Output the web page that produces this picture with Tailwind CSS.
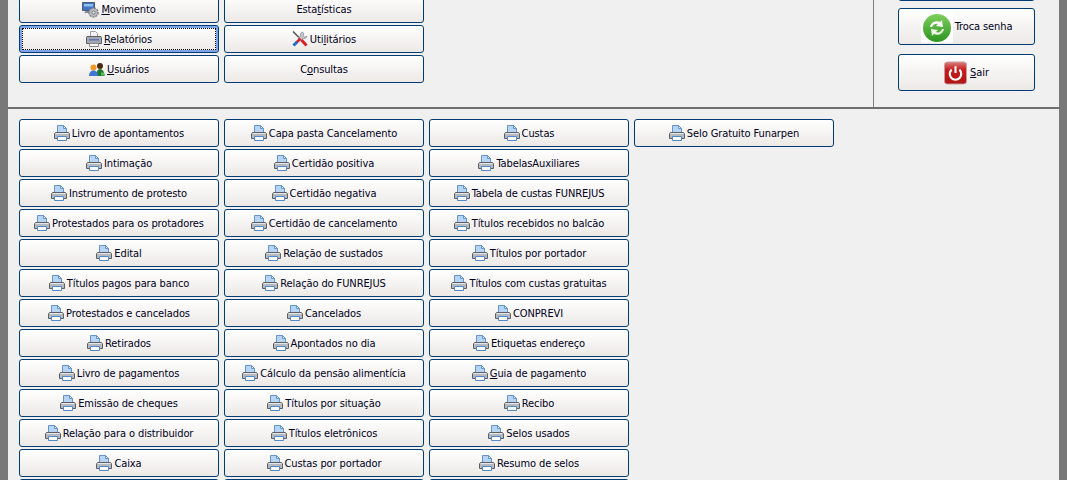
<!DOCTYPE html>
<html lang="pt-BR">
<head>
  <meta charset="UTF-8" />
  <title>Relatórios</title>
  <script src="https://cdn.jsdelivr.net/npm/@tailwindcss/browser@4"></script>
</head>
<body class="bg-[#f0f0f0] overflow-hidden">
  <svg width="0" height="0" class="absolute">
    <symbol id="printer" viewBox="0 0 16 16">
      <path d="M3.500 .5h6l3 3v7h-9z" fill="#b8d4f4" stroke="#6494cc"/>
      <path d="M9.500 .5v3h3z" fill="#eaf3fc" stroke="#6494cc"/>
      <path d="M1.500 7.500h13l1 1.500v4.500H.5V9z" fill="#b6b9be" stroke="#5c6066"/>
      <path d="M1.500 8.500h13" stroke="#e8e8ea"/>
      <path d="M3.500 11.500h9v4h-9z" fill="#fdfdfd" stroke="#5089c8"/>
    </symbol>
    <symbol id="printer-dark" viewBox="0 0 16 16">
      <path d="M4.500 .5h5l2 2v5h-7z" fill="#f2f2f2" stroke="#a0a0a0"/>
      <path d="M1 5.500h14l.5 1v6H.5v-6z" fill="#a4a8ae" stroke="#5b6068"/>
      <path d="M3 8h10v1.500H3z" fill="#5d74b8"/>
      <path d="M3.500 12.500h9v3h-9z" fill="#f4f4f4" stroke="#8a8a8a"/>
    </symbol>
    <symbol id="monitor" viewBox="0 0 17 17">
      <path d="M.5 1.500h12v8H.5z" fill="#3f74c4" stroke="#4a5a78"/>
      <path d="M2 3h9v2.500H2z" fill="#8fc0ee"/>
      <path d="M4 10h5v2H2.500v-1z" fill="#7c8aa0"/>
      <circle cx="11.500" cy="11.500" r="4.500" fill="#b9bcc0" stroke="#7d8085" stroke-width="1.500" stroke-dasharray="2 1"/>
      <circle cx="11.500" cy="11.500" r="1.500" fill="#eeeeee" stroke="#777"/>
    </symbol>
    <symbol id="users" viewBox="0 0 16 13">
      <circle cx="11" cy="3" r="3" fill="#4a2a12"/>
      <path d="M7.500 11c0-3 1.500-5 3.500-5s4 2 4.500 5v2h-8z" fill="#1f7a30"/>
      <path d="M12 9.500h3v3h-3z" fill="#58c060"/>
      <circle cx="4.500" cy="4.500" r="3" fill="#f09a28"/>
      <path d="M0 13c0-3.500 2-5.500 4.500-5.500S9 9.500 9 13z" fill="#3f78d0"/>
    </symbol>
    <symbol id="tools" viewBox="0 0 16 16">
      <path d="M1 .5l6 6" stroke="#555" stroke-width="1.500"/>
      <path d="M6.500 6l4 4" stroke="#9aa0a6" stroke-width="2"/>
      <path d="M9.500 9l5 5.500" stroke="#d8202a" stroke-width="3"/>
      <path d="M10.500 1c-1.800.6-2.500 2.500-1.700 4L6 8l2 2 3-2.800c1.600.8 3.600 0 4-2l-2 1-1.800-1.300.3-2.400z" fill="#c4c8cc" stroke="#80848a" stroke-width=".7"/>
      <path d="M8.500 7.500L4.500 11.500" stroke="#d8202a" stroke-width="2.500"/>
      <path d="M5 11L1.500 14.500" stroke="#1f6fd0" stroke-width="3"/>
    </symbol>
  </svg>

  <div class="w-[1067px] h-[480px] overflow-hidden border-x-[8px] border-[#787878] text-[11px] tracking-[-0.1px] text-[#000020] [font-family:'DejaVu_Sans_Condensed','DejaVu_Sans',sans-serif]">
    <!-- topo -->
    <div class="flex h-[109px] border-b-2 border-[#6e6e6e]">
      <div id="menu" class="w-[865px] pl-[11px] -mt-[5px] grid grid-cols-[200px_200px] auto-rows-[28px] gap-x-[5px] gap-y-[2px] content-start"></div>
      <div class="flex-1 border-l border-[#808080] pl-[24px] -mt-[36px]">
        <button class="w-[137px] h-[37px] block rounded-[3px] border border-[#003c74] bg-gradient-to-b from-white to-[#ece9e6]"></button>
        <button class="w-[137px] h-[37px] mt-[7px] flex items-center justify-center gap-[2px] rounded-[3px] border border-[#003c74] bg-gradient-to-b from-white to-[#ece9e6]">
          <svg width="32" height="32" viewBox="0 0 32 32" class="bg-white rounded-[2px]">
            <defs>
              <linearGradient id="verde" x1="0" y1="0" x2="0" y2="1">
                <stop offset="0" stop-color="#7fd05e"/>
                <stop offset="1" stop-color="#2c9420"/>
              </linearGradient>
            </defs>
            <circle cx="16" cy="17" r="14" fill="url(#verde)"/>
            <path d="M9 16c1-5 6-7 10-5l2-2 1 7-7-1 2-2c-2-1-5 0-6 3z" fill="#fff"/>
            <path d="M23 18c-1 5-6 7-10 5l-2 2-1-7 7 1-2 2c2 1 5 0 6-3z" fill="#e8f6e0"/>
          </svg>
          <span class="pt-[2px]">Troca senha</span>
        </button>
        <button class="w-[137px] h-[37px] mt-[9px] flex items-center justify-center gap-[3px] rounded-[3px] border border-[#003c74] bg-gradient-to-b from-white to-[#ece9e6]">
          <svg width="23" height="24" viewBox="0 0 24 24">
            <defs>
              <linearGradient id="vermelho" x1="0" y1="0" x2="0" y2="1">
                <stop offset="0" stop-color="#d88080"/>
                <stop offset=".35" stop-color="#c81c1c"/>
                <stop offset="1" stop-color="#b01414"/>
              </linearGradient>
            </defs>
            <rect x=".5" y=".5" width="23" height="23" rx="3" fill="url(#vermelho)" stroke="#c8a0a0"/>
            <path d="M8 8.500a6 6 0 1 0 8 0" fill="none" stroke="#fff" stroke-width="2.200"/>
            <path d="M12 5v7" stroke="#fff" stroke-width="2.200"/>
          </svg>
          <span class="pt-[2px]"><u>S</u>air</span>
        </button>
      </div>
    </div>

    <!-- relatorios -->
    <div id="relatorios" class="pl-[11px] pt-[10px] grid grid-flow-col grid-rows-[repeat(13,28px)] auto-cols-[200px] gap-x-[5px] gap-y-[2px]"></div>
  </div>

  <script>
    const BTN = "flex items-center justify-center gap-[2px] rounded-[3px] border border-[#003c74] bg-gradient-to-b from-white to-[#ece9e6]";
    const FOCUS = "relative ring-2 ring-inset ring-[#7da6ea] after:absolute after:inset-[2px] after:border after:border-dotted after:border-black";

    const menu = [
      ["monitor", "<u>M</u>ovimento", 17, 17],
      [null, "Esta<u>t</u>ísticas"],
      ["printer-dark", "<u>R</u>elatórios", 16, 16, true],
      ["tools", "Uti<u>l</u>itários", 16, 16],
      ["users", "<u>U</u>suários", 16, 13],
      [null, "C<u>o</u>nsultas"]
    ];

    const relatorios = [
      "Livro de apontamentos", "Intimação", "Instrumento de protesto", "Protestados para os protadores",
      "Edital", "Títulos pagos para banco", "Protestados e cancelados", "Retirados", "Livro de pagamentos",
      "Emissão de cheques", "Relação para o distribuidor", "Caixa", "",
      "Capa pasta Cancelamento", "Certidão positiva", "Certidão negativa", "Certidão de cancelamento",
      "Relação de sustados", "Relação do FUNREJUS", "Cancelados", "Apontados no dia",
      "Cálculo da pensão alimentícia", "Títulos por situação", "Títulos eletrônicos", "Custas por portador", "",
      "Custas", "TabelasAuxiliares", "Tabela de custas FUNREJUS", "Títulos recebidos no balcão",
      "Títulos por portador", "Títulos com custas gratuitas", "CONPREVI", "Etiquetas endereço",
      "<u>G</u>uia de pagamento", "Recibo", "Selos usados", "Resumo de selos", "",
      "Selo Gratuito Funarpen"
    ];

    function icon(id, w, h) {
      return `<svg width="${w}" height="${h}"><use href="#${id}"/></svg>`;
    }

    document.getElementById("menu").innerHTML = menu.map(([id, label, w, h, focus]) =>
      `<button class="${BTN} ${focus ? FOCUS : ""}">${id ? icon(id, w, h) : ""}<span class="pt-[2px]">${label}</span></button>`
    ).join("");

    document.getElementById("relatorios").innerHTML = relatorios.map(label =>
      `<button class="${BTN}">${label ? icon("printer", 16, 16) : ""}<span class="pt-[2px]">${label}</span></button>`
    ).join("");
  </script>
</body>
</html>
